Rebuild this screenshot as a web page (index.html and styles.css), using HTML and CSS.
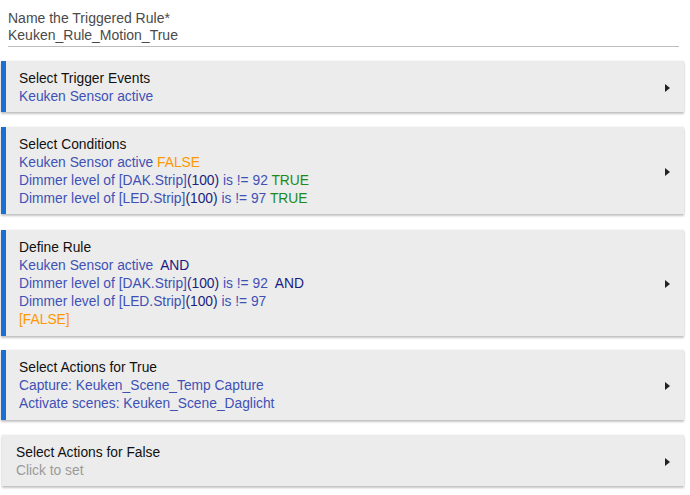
FILE: index.html
```html
<!DOCTYPE html>
<html>
<head>
<meta charset="utf-8">
<link rel="stylesheet" href="styles.css">
</head>
<body>
<div class="page">
  <div class="field">
    <div class="label">Name the Triggered Rule*</div>
    <div class="value">Keuken_Rule_Motion_True</div>
  </div>

  <div class="card marked c1">
    <div class="body">
      <div class="title">Select Trigger Events</div>
      <div class="ln">Keuken Sensor active</div>
    </div>
    <span class="arrow"></span>
  </div>

  <div class="card marked c2">
    <div class="body">
      <div class="title">Select Conditions</div>
      <div class="ln">Keuken Sensor active <span class="false">FALSE</span></div>
      <div class="ln">Dimmer level of [DAK.Strip]<span class="dark">(100)</span> is != 92 <span class="true">TRUE</span></div>
      <div class="ln">Dimmer level of [LED.Strip]<span class="dark">(100)</span> is != 97 <span class="true">TRUE</span></div>
    </div>
    <span class="arrow"></span>
  </div>

  <div class="card marked c3">
    <div class="body">
      <div class="title">Define Rule</div>
      <div class="ln">Keuken Sensor active&nbsp; <span class="op">AND</span></div>
      <div class="ln">Dimmer level of [DAK.Strip]<span class="dark">(100)</span> is != 92&nbsp; <span class="op">AND</span></div>
      <div class="ln">Dimmer level of [LED.Strip]<span class="dark">(100)</span> is != 97</div>
      <div class="ln"><span class="false">[FALSE]</span></div>
    </div>
    <span class="arrow"></span>
  </div>

  <div class="card marked c4">
    <div class="body">
      <div class="title">Select Actions for True</div>
      <div class="ln">Capture: Keuken_Scene_Temp Capture</div>
      <div class="ln">Activate scenes: Keuken_Scene_Daglicht</div>
    </div>
    <span class="arrow"></span>
  </div>

  <div class="card plain c5">
    <div class="body">
      <div class="title">Select Actions for False</div>
      <div class="ln muted">Click to set</div>
    </div>
    <span class="arrow"></span>
  </div>
</div>
</body>
</html>
```
FILE: styles.css
```css
html, body {
  margin: 0;
  padding: 0;
  background: #ffffff;
}
body {
  font-family: "Liberation Sans", Arial, sans-serif;
}
.page {
  width: 683px;
  padding: 0 0 0 1px;
  display: flex;
  flex-direction: column;
}
.field {
  margin: 0 5px 14px 7px;
  padding-top: 10px;
  border-bottom: 1px solid #bdbdbd;
  color: #4a4a4a;
  font-size: 14px;
  line-height: 17px;
}
.field .value {
  padding: 0 0 2px;
}
.card {
  display: flex;
  align-items: center;
  background: #ececec;
  box-shadow: 0 2px 2px rgba(0,0,0,0.22), 0 0 2px rgba(0,0,0,0.10);
  margin-bottom: 14px;
  padding: 9px 0 6px;
}
.card.marked {
  border-left: 5px solid #1a6fd1;
  padding-left: 13px;
}
.card.plain {
  margin-left: 1px;
  padding-left: 14px;
}
.c1 { margin-bottom: 15px; }
.c2 { margin-bottom: 16px; }
.c3 { padding-bottom: 7px; margin-bottom: 14px; }
.c4 { padding-bottom: 7px; margin-bottom: 15px; }
.body {
  flex: 1;
  font-size: 13.8px;
  line-height: 18px;
  color: #3f51b5;
}
.title {
  color: #111;
}
.dark { color: #1a237e; }
.op { color: #1a1a80; }
.false { color: #ff9800; }
.true { color: #1b8a1b; }
.muted { color: #9a9a9a; }
.arrow {
  width: 0;
  height: 0;
  border-top: 4px solid transparent;
  border-bottom: 4px solid transparent;
  border-left: 5px solid #222;
  margin-right: 14px;
}
```
